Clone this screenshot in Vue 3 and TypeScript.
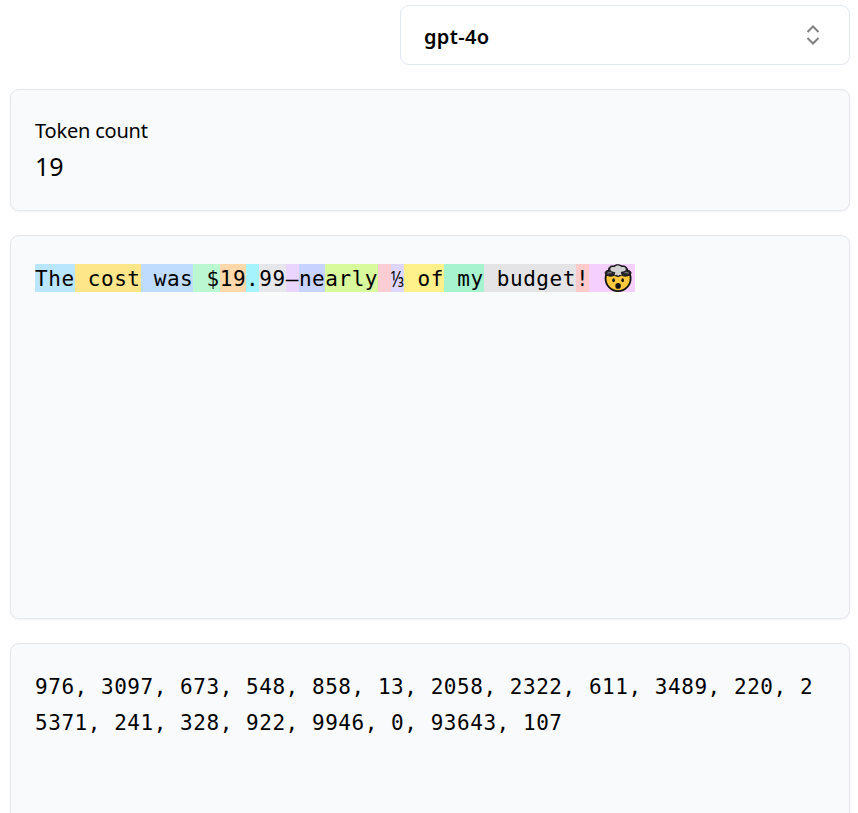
<script setup lang="ts">
interface Token {
  text: string
  color: string
  fraction?: boolean
  exploding?: boolean
}

const model = 'gpt-4o'
const count = 19

const tokens: Token[] = [
  { text: 'The', color: '#bae6fd' },
  { text: ' cost', color: '#fde68a' },
  { text: ' was', color: '#bfdbfe' },
  { text: ' $', color: '#bbf7d0' },
  { text: '19', color: '#fed7aa' },
  { text: '.', color: '#a5f3fc' },
  { text: '99', color: '#e5e7eb' },
  { text: '—', color: '#e9d5ff' },
  { text: 'ne', color: '#c7d2fe' },
  { text: 'arly', color: '#d9f99d' },
  { text: ' ', color: '#fecdd3' },
  { text: '⅓', color: '#ddd6fe', fraction: true },
  { text: ' of', color: '#fef08a' },
  { text: ' my', color: '#a7f3d0' },
  { text: ' budget', color: '#e4e4e7' },
  { text: '!', color: '#fecaca' },
  { text: ' ', color: '#f5d0fe', exploding: true },
]

const ids: number[] = [
  976, 3097, 673, 548, 858, 13, 2058, 2322, 611, 3489, 220, 25371, 241, 328, 922, 9946, 0, 93643, 107,
]
</script>

<template>
  <main class="page">
    <button class="select" type="button">
      <span class="select-label">{{ model }}</span>
      <svg class="chevrons" viewBox="0 0 24 24" fill="none" stroke="currentColor" stroke-width="2">
        <path d="m6.500 9 5.500-5.500L17.500 9M6.500 15l5.500 5.500 5.500-5.500" />
      </svg>
    </button>

    <section class="card summary">
      <p class="caption">Token count</p>
      <p class="count">{{ count }}</p>
    </section>

    <section class="card preview mono">
      <span v-for="(token, i) in tokens" :key="i" class="token" :style="{ backgroundColor: token.color }"><span :class="{ fraction: token.fraction }">{{ token.text }}</span><svg
        v-if="token.exploding" class="emoji" viewBox="0 0 33 28" role="img">
        <circle cx="16.3" cy="14.5" r="12.7" fill="#ffc83d" stroke="#111" stroke-width="1.8" />
        <path d="M4.2 10.8C2 8.500 3.800 6.300 7 6.200 6 3 9 1 12 2c2-2 6-2 8 0 3-1 6 1 5.600 4.200 3.400.2 5 2.600 2.800 4.600-3 1.600-6 1.700-8.400.5l-3.800 1.200-3.800-1.200c-2.600 1.300-5.600 1.100-8.200-.5Z" fill="#25252a" stroke="#111" stroke-width="1" />
        <path d="M9 6.700C7.300 3.500 10 2.200 12.500 3c2-2.300 5.500-2 7.200 0 3-.8 5.300.8 4 3.500-1.800 1.500-4.300.6-4.700 1.900l.9 3-2.300-.7-1.300 1.300-1.300-1.300-2.300.5.8-2.800c-.8-1-3 0-4.500-1.700Z" fill="#d2d2d2" />
        <path d="m5.500 9.300 2.200-1 2 .7M27 9.300l-2.200-1-2 .7" fill="none" stroke="#777" stroke-width="1.200" />
        <ellipse cx="11.700" cy="16.300" rx="1.300" ry="2.100" fill="#111" />
        <ellipse cx="20.900" cy="16.300" rx="1.300" ry="2.100" fill="#111" />
        <ellipse cx="16.300" cy="22" rx="2.800" ry="2.900" fill="#111" />
      </svg></span>
    </section>

    <section class="card ids mono">{{ ids.join(', ') }}</section>
  </main>
</template>

<style>
body {
  background: #fff;
  overflow: hidden;
}
</style>

<style scoped>
.page {
  box-sizing: border-box;
  height: 813px;
  padding: 5px 8px 0 10px;
  overflow: hidden;
  display: flex;
  flex-direction: column;
  gap: 24px;
  color: #000;
  font-family: "Noto Sans", "Open Sans", sans-serif;
}

.select {
  box-sizing: border-box;
  align-self: flex-end;
  flex: none;
  width: 450px;
  height: 60px;
  padding: 0 24px 0 23px;
  display: flex;
  align-items: center;
  justify-content: space-between;
  border: 1px solid #e2e8f0;
  border-radius: 9px;
  background: #fff;
  color: #000;
  font: 600 20px/30px "Noto Sans", "Open Sans", sans-serif;
  letter-spacing: 0.35px;
}

.select-label {
  padding-top: 4px;
}

.chevrons {
  width: 24px;
  height: 24px;
  color: #808080;
}

.card {
  box-sizing: border-box;
  flex: none;
  padding: 24px;
  border: 1px solid #e5e7eb;
  border-radius: 9px;
  background: #f8fafc;
  box-shadow: 0 1px 3px rgba(0, 0, 0, 0.05);
}

.summary {
  height: 122px;
  padding-top: 25px;
}

.caption,
.count {
  margin: 0;
}

.caption {
  font-size: 20px;
  line-height: 32px;
  letter-spacing: -0.2px;
}

.count {
  font-size: 25px;
  line-height: 38px;
}

.mono {
  font-family: "DejaVu Sans Mono", "Liberation Mono", monospace;
  font-size: 21px;
  line-height: 36px;
  letter-spacing: 0.545px;
}

.preview {
  height: 384px;
  display: flex;
  align-items: flex-start;
  padding-top: 28px;
}

.token {
  flex: none;
  height: 28px;
  line-height: 30px;
  white-space: pre;
}

.fraction {
  display: flex;
  justify-content: center;
  width: 13.2px;
  font-family: "Noto Sans", sans-serif;
  font-size: 21px;
  letter-spacing: 0;
  transform: scaleX(0.78);
}

.emoji {
  width: 32.600px;
  height: 28px;
  vertical-align: top;
}

.ids {
  height: 384px;
  padding-top: 25px;
  word-break: break-all;
}
</style>
